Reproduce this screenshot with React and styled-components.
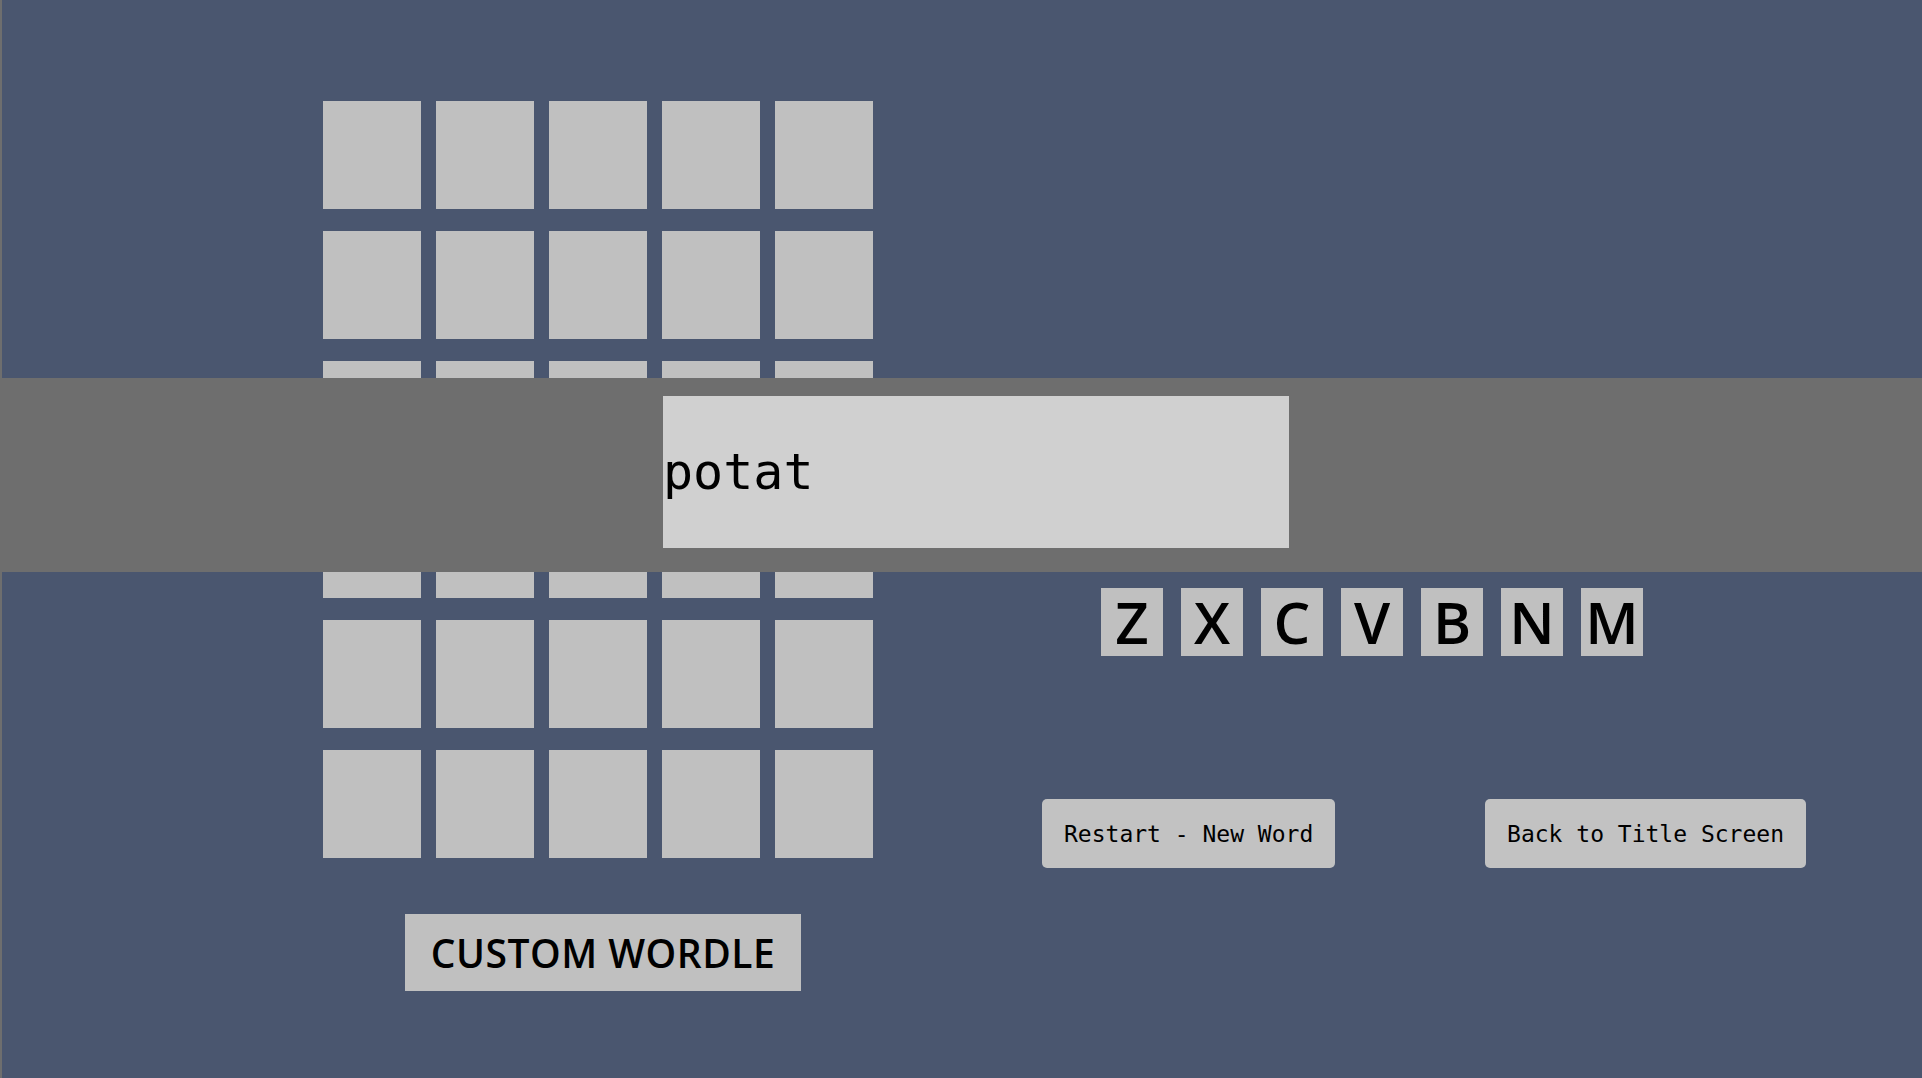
import React, { useState } from 'react';
import styled, { createGlobalStyle } from 'styled-components';

const GlobalStyle = createGlobalStyle`
  html, body {
    margin: 0;
    padding: 0;
    overflow: hidden;
  }
  * {
    box-sizing: border-box;
  }
`;

const ROWS = 6;
const COLS = 5;
const KEYS = ['Z', 'X', 'C', 'V', 'B', 'N', 'M'];

const App = () => {
  const [guess, setGuess] = useState('potat');

  return (
    <Page>
      <GlobalStyle />
      <LeftColumn>
        <Board>
          {Array.from({ length: ROWS * COLS }).map((_, i) => (
            <Tile key={i} />
          ))}
        </Board>
        <Title>CUSTOM WORDLE</Title>
      </LeftColumn>

      <RightColumn>
        <KeyRow>
          {KEYS.map((k) => (
            <Key key={k}>{k}</Key>
          ))}
        </KeyRow>
        <ButtonRow>
          <ActionButton>Restart - New Word</ActionButton>
          <ActionButton>Back to Title Screen</ActionButton>
        </ButtonRow>
      </RightColumn>

      <WordOverlay>
        <WordInput
          autoFocus
          value={guess}
          onChange={(e) => setGuess(e.target.value)}
          spellCheck={false}
        />
      </WordOverlay>
    </Page>
  );
};

export default App;

const Page = styled.div`
  position: relative;
  display: flex;
  width: 100vw;
  height: 100vh;
  background: #4a566f;
  border-left: 2px solid #6e6e6e;
`;

const LeftColumn = styled.div`
  display: flex;
  flex-direction: column;
  align-items: flex-start;
  padding: 101px 0 0 321px;
`;

const Board = styled.div`
  display: grid;
  grid-template-columns: repeat(5, 98px);
  grid-auto-rows: 108px;
  column-gap: 15px;
  row-gap: 21.8px;
`;

const Tile = styled.div`
  background: #c0c0c0;
`;

const Title = styled.h1`
  margin: 56px 0 0 82px;
  width: 396px;
  height: 77px;
  display: flex;
  align-items: center;
  justify-content: center;
  background: #c0c0c0;
  color: #000;
  font-family: 'Open Sans', 'Noto Sans', sans-serif;
  font-weight: 600;
  font-size: 39px;
  letter-spacing: 0.5px;
  white-space: nowrap;
`;

const RightColumn = styled.div`
  display: flex;
  flex-direction: column;
  margin-left: 169px;
  width: 764px;
  padding-top: 588px;
`;

const KeyRow = styled.div`
  display: flex;
  gap: 18px;
  margin-left: 59px;
`;

const Key = styled.div`
  width: 62px;
  height: 68px;
  background: #c0c0c0;
  color: #000;
  font-family: 'Open Sans', 'Noto Sans', sans-serif;
  font-weight: 600;
  font-size: 58px;
  line-height: 68px;
  text-align: center;
`;

const ButtonRow = styled.div`
  display: flex;
  justify-content: space-between;
  margin-top: 143px;
`;

const ActionButton = styled.button`
  height: 69px;
  padding: 0 22px;
  border: none;
  border-radius: 5px;
  background: #c2c2c2;
  color: #000;
  font-family: 'DejaVu Sans Mono', 'Liberation Mono', monospace;
  font-size: 23px;
  cursor: pointer;
`;

const WordOverlay = styled.div`
  position: absolute;
  top: 378px;
  left: 0;
  right: 0;
  height: 194px;
  background: #6e6e6e;
  padding: 18px 0 0 661px;
`;

const WordInput = styled.input`
  width: 626px;
  height: 152px;
  padding: 0;
  border: none;
  outline: none;
  background: #d0d0d0;
  color: #000;
  caret-color: #fff;
  font-family: 'DejaVu Sans Mono', 'Liberation Mono', monospace;
  font-size: 50px;
`;
